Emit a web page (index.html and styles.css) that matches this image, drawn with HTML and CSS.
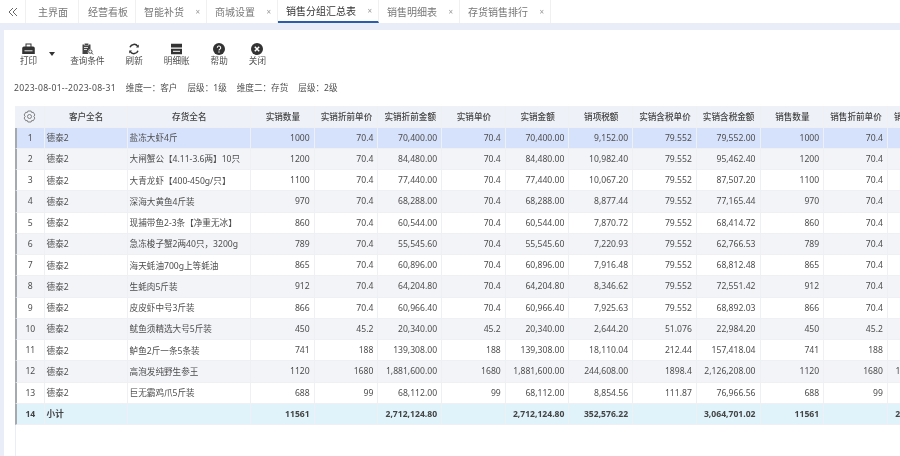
FILE: index.html
```html
<!DOCTYPE html>
<html lang="zh-CN">
<head>
    <meta charset="UTF-8">
    <title>销售分组汇总表</title>
    <link rel="stylesheet" href="styles.css">
</head>
<body>
    <div class="tabs">
        <div class="tab-toggle">
            <svg width="10" height="10" viewBox="0 0 10 10"><path d="M5 1 1 5l4 4M9 1 5 5l4 4" fill="none" stroke="#666" stroke-width="1"/></svg>
        </div>
        <div class="tab tab-home">主界面</div>
        <div class="tab tab-board">经营看板</div>
        <div class="tab tab-refill">智能补货<span class="tab-close">×</span></div>
        <div class="tab tab-mall">商城设置<span class="tab-close">×</span></div>
        <div class="tab tab-group active">销售分组汇总表<span class="tab-close">×</span></div>
        <div class="tab tab-detail">销售明细表<span class="tab-close">×</span></div>
        <div class="tab tab-rank">存货销售排行<span class="tab-close">×</span></div>
    </div>

    <div class="panel">
        <div class="toolbar">
            <div class="tool">
                <svg width="13" height="12" viewBox="0 0 13 12"><path d="M3.500.5h6v3.500h-6z" fill="#333"/><path d="M2 3.500h9a1.800 1.800 0 0 1 1.800 1.800V11H.2V5.300A1.800 1.800 0 0 1 2 3.500z" fill="#333"/><path d="M2.500 7.800h8" stroke="#fff" stroke-width=".9"/><path d="M4.500 1.500h4v2h-4z" fill="#fff"/></svg>
                <span>打印</span>
            </div>
            <div class="tool-arrow"></div>
            <div class="tool">
                <svg width="13" height="12" viewBox="0 0 13 12"><path d="M1.500 1.500h8v4.500a3 3 0 0 0-2 5h-6z" fill="#444"/><path d="M3.500.3h4v2h-4z" fill="#333" stroke="#fff" stroke-width=".5"/><path d="M3 4.500h4M3 6.500h3" stroke="#fff" stroke-width=".8"/><circle cx="9.300" cy="8.600" r="1.700" fill="none" stroke="#444" stroke-width=".9"/><path d="m10.500 9.900 1.500 1.500" stroke="#444"/></svg>
                <span>查询条件</span>
            </div>
            <div class="tool">
                <svg width="12" height="12" viewBox="0 0 12 12"><path d="M2 4.200A4.300 4.300 0 0 1 9.700 3.400M10 7.800A4.300 4.300 0 0 1 2.300 8.600" fill="none" stroke="#333" stroke-width="1.500"/><path d="M10.800 1.500v3H8zM1.200 10.500v-3H4z" fill="#333"/></svg>
                <span>刷新</span>
            </div>
            <div class="tool">
                <svg width="13" height="12" viewBox="0 0 13 12"><path d="M1 .8h11v3.700H1zM1 5.800h11v5.400H1z" fill="#333"/><path d="M3 8.300h7" stroke="#fff" stroke-width="1"/></svg>
                <span>明细账</span>
            </div>
            <div class="tool">
                <svg width="12" height="12" viewBox="0 0 12 12"><circle cx="6" cy="6" r="6" fill="#333"/><path d="M4.300 4.700a1.700 1.700 0 1 1 2.500 1.500c-.6.300-.8.600-.8 1.200" fill="none" stroke="#fff" stroke-width="1.100"/><circle cx="6" cy="9" r=".7" fill="#fff"/></svg>
                <span>帮助</span>
            </div>
            <div class="tool">
                <svg width="12" height="12" viewBox="0 0 12 12"><circle cx="6" cy="6" r="6" fill="#333"/><path d="m3.800 3.800 4.400 4.400m0-4.400L3.800 8.200" stroke="#fff" stroke-width="1.500"/></svg>
                <span>关闭</span>
            </div>
        </div>

        <div class="filters">
            <span class="date-range">2023-08-01--2023-08-31</span>
            <span>维度一：客户</span>
            <span>层级：1级</span>
            <span>维度二：存货</span>
            <span>层级：2级</span>
        </div>

        <div class="grid-wrap">
            <table class="grid">
                <colgroup>
                    <col class="col-idx"><col class="col-customer"><col class="col-stock">
                    <col class="col-num"><col class="col-num"><col class="col-num"><col class="col-num"><col class="col-num">
                    <col class="col-num"><col class="col-num"><col class="col-num"><col class="col-num"><col class="col-num"><col class="col-num">
                </colgroup>
                <thead>
                    <tr>
                        <th>
                            <svg width="13" height="13" viewBox="0 0 13 13"><path d="M4.900 1h3.200l.6 1.500 1.600-.2 1.600 2.700-1 1.300.0.400 1 1.300-1.600 2.700-1.600-.2L8.100 12H4.900l-.6-1.500-1.600.2L1.100 8l1-1.300v-.4L1.100 5l1.600-2.700 1.600.2z" fill="none" stroke="#666" stroke-width=".8" stroke-linejoin="round"/><circle cx="6.500" cy="6.500" r="2" fill="none" stroke="#666" stroke-width=".8"/></svg>
                        </th>
                        <th>客户全名</th><th>存货全名</th><th>实销数量</th><th>实销折前单价</th><th>实销折前金额</th><th>实销单价</th><th>实销金额</th><th>销项税额</th><th>实销含税单价</th><th>实销含税金额</th><th>销售数量</th><th>销售折前单价</th><th>销售折前金额</th>
                    </tr>
                </thead>
                <tbody>
                    <tr class="selected"><td class="idx">1</td><td>德泰2</td><td>盐冻大虾4斤</td><td class="num">1000</td><td class="num">70.4</td><td class="num">70,400.00</td><td class="num">70.4</td><td class="num">70,400.00</td><td class="num">9,152.00</td><td class="num">79.552</td><td class="num">79,552.00</td><td class="num">1000</td><td class="num">70.4</td><td class="num">70,400.00</td></tr>
                    <tr><td class="idx">2</td><td>德泰2</td><td>大闸蟹公【4.11-3.6两】10只</td><td class="num">1200</td><td class="num">70.4</td><td class="num">84,480.00</td><td class="num">70.4</td><td class="num">84,480.00</td><td class="num">10,982.40</td><td class="num">79.552</td><td class="num">95,462.40</td><td class="num">1200</td><td class="num">70.4</td><td class="num">84,480.00</td></tr>
                    <tr><td class="idx">3</td><td>德泰2</td><td>大青龙虾【400-450g/只】</td><td class="num">1100</td><td class="num">70.4</td><td class="num">77,440.00</td><td class="num">70.4</td><td class="num">77,440.00</td><td class="num">10,067.20</td><td class="num">79.552</td><td class="num">87,507.20</td><td class="num">1100</td><td class="num">70.4</td><td class="num">77,440.00</td></tr>
                    <tr><td class="idx">4</td><td>德泰2</td><td>深海大黄鱼4斤装</td><td class="num">970</td><td class="num">70.4</td><td class="num">68,288.00</td><td class="num">70.4</td><td class="num">68,288.00</td><td class="num">8,877.44</td><td class="num">79.552</td><td class="num">77,165.44</td><td class="num">970</td><td class="num">70.4</td><td class="num">68,288.00</td></tr>
                    <tr><td class="idx">5</td><td>德泰2</td><td>现捕带鱼2-3条【净重无冰】</td><td class="num">860</td><td class="num">70.4</td><td class="num">60,544.00</td><td class="num">70.4</td><td class="num">60,544.00</td><td class="num">7,870.72</td><td class="num">79.552</td><td class="num">68,414.72</td><td class="num">860</td><td class="num">70.4</td><td class="num">60,544.00</td></tr>
                    <tr><td class="idx">6</td><td>德泰2</td><td>急冻梭子蟹2两40只，3200g</td><td class="num">789</td><td class="num">70.4</td><td class="num">55,545.60</td><td class="num">70.4</td><td class="num">55,545.60</td><td class="num">7,220.93</td><td class="num">79.552</td><td class="num">62,766.53</td><td class="num">789</td><td class="num">70.4</td><td class="num">55,545.60</td></tr>
                    <tr><td class="idx">7</td><td>德泰2</td><td>海天蚝油700g上等蚝油</td><td class="num">865</td><td class="num">70.4</td><td class="num">60,896.00</td><td class="num">70.4</td><td class="num">60,896.00</td><td class="num">7,916.48</td><td class="num">79.552</td><td class="num">68,812.48</td><td class="num">865</td><td class="num">70.4</td><td class="num">60,896.00</td></tr>
                    <tr><td class="idx">8</td><td>德泰2</td><td>生蚝肉5斤装</td><td class="num">912</td><td class="num">70.4</td><td class="num">64,204.80</td><td class="num">70.4</td><td class="num">64,204.80</td><td class="num">8,346.62</td><td class="num">79.552</td><td class="num">72,551.42</td><td class="num">912</td><td class="num">70.4</td><td class="num">64,204.80</td></tr>
                    <tr><td class="idx">9</td><td>德泰2</td><td>皮皮虾中号3斤装</td><td class="num">866</td><td class="num">70.4</td><td class="num">60,966.40</td><td class="num">70.4</td><td class="num">60,966.40</td><td class="num">7,925.63</td><td class="num">79.552</td><td class="num">68,892.03</td><td class="num">866</td><td class="num">70.4</td><td class="num">60,966.40</td></tr>
                    <tr><td class="idx">10</td><td>德泰2</td><td>鱿鱼须精选大号5斤装</td><td class="num">450</td><td class="num">45.2</td><td class="num">20,340.00</td><td class="num">45.2</td><td class="num">20,340.00</td><td class="num">2,644.20</td><td class="num">51.076</td><td class="num">22,984.20</td><td class="num">450</td><td class="num">45.2</td><td class="num">20,340.00</td></tr>
                    <tr><td class="idx">11</td><td>德泰2</td><td>鲈鱼2斤一条5条装</td><td class="num">741</td><td class="num">188</td><td class="num">139,308.00</td><td class="num">188</td><td class="num">139,308.00</td><td class="num">18,110.04</td><td class="num">212.44</td><td class="num">157,418.04</td><td class="num">741</td><td class="num">188</td><td class="num">139,308.00</td></tr>
                    <tr><td class="idx">12</td><td>德泰2</td><td>高泡发纯野生参王</td><td class="num">1120</td><td class="num">1680</td><td class="num">1,881,600.00</td><td class="num">1680</td><td class="num">1,881,600.00</td><td class="num">244,608.00</td><td class="num">1898.4</td><td class="num">2,126,208.00</td><td class="num">1120</td><td class="num">1680</td><td class="num">1,881,600.00</td></tr>
                    <tr><td class="idx">13</td><td>德泰2</td><td>巨无霸鸡爪5斤装</td><td class="num">688</td><td class="num">99</td><td class="num">68,112.00</td><td class="num">99</td><td class="num">68,112.00</td><td class="num">8,854.56</td><td class="num">111.87</td><td class="num">76,966.56</td><td class="num">688</td><td class="num">99</td><td class="num">68,112.00</td></tr>
                    <tr class="total"><td class="idx">14</td><td>小计</td><td></td><td class="num">11561</td><td></td><td class="num">2,712,124.80</td><td></td><td class="num">2,712,124.80</td><td class="num">352,576.22</td><td></td><td class="num">3,064,701.02</td><td class="num">11561</td><td></td><td class="num">2,712,124.80</td></tr>
                </tbody>
            </table>
        </div>
    </div>
</body>
</html>
```

FILE: styles.css
```css
html, body {
    height: 100%;
}
body {
    margin: 0;
    overflow: hidden;
    display: flex;
    flex-direction: column;
    font-family: "Noto Sans", "Noto Sans CJK SC", sans-serif;
    font-size: 8.6px;
    color: #4d4d4d;
    background: #e9edf7;
    filter: blur(0.3px);
}

/* top tabs */
.tabs {
    display: flex;
    height: 23px;
    flex: none;
    background: #fff;
}
.tab-toggle {
    width: 26px;
    flex: none;
    display: flex;
    align-items: center;
    justify-content: center;
    border-right: 1px solid #f0f0f0;
    box-sizing: border-box;
}
.tab {
    box-sizing: border-box;
    display: flex;
    align-items: center;
    padding-left: 8px;
    font-size: 10px;
    color: #777;
    border-right: 1px solid #f0f0f0;
    white-space: nowrap;
}
.tab-home { width: 53px; padding-left: 12px; }
.tab-board { width: 57px; padding-left: 9px; }
.tab-refill, .tab-mall { width: 71px; }
.tab-group { width: 101px; }
.tab-detail { width: 81px; }
.tab-rank { width: 91px; }
.tab.active {
    color: #333;
    border-bottom: 2px solid #2b5ea7;
}
.tab-close {
    margin-left: auto;
    margin-right: 6px;
    font-size: 8px;
    color: #999;
}

/* main panel */
.panel {
    flex: 1;
    margin: 7px 0 0 4px;
    background: #fff;
    min-height: 0;
    display: flex;
    flex-direction: column;
}
.toolbar {
    display: flex;
    gap: 21px;
    padding: 13px 0 0 16px;
}
.tool {
    display: flex;
    flex-direction: column;
    align-items: center;
}
.tool span {
    line-height: 12px;
}
.tool-arrow {
    width: 0;
    height: 0;
    margin: 9px -6px 0 -9px;
    border-left: 3px solid transparent;
    border-right: 3px solid transparent;
    border-top: 4px solid #333;
}
.filters {
    display: flex;
    gap: 10px;
    padding: 15px 0 0 10px;
    line-height: 12px;
}
.date-range {
    letter-spacing: 0.3px;
}

/* data grid */
.grid-wrap {
    flex: 1;
    margin: 12px 0 0 11px;
    box-shadow: inset 1px 0 #e9edf7;
    overflow: hidden;
}
.grid {
    border-collapse: separate;
    border-spacing: 0;
    table-layout: fixed;
    width: 936.7px;
}
.col-idx { width: 29.6px; }
.col-customer { width: 83px; }
.col-stock { width: 123.4px; }
.col-num { width: 63.7px; }
.grid th, .grid td {
    height: 21.25px;
    padding: 0 6px;
    box-sizing: border-box;
    border-right: 1px solid #eef0f4;
    border-bottom: 1px solid #eef0f4;
    white-space: nowrap;
    overflow: hidden;
}
.grid th {
    height: 21.5px;
    padding: 0 0 0 1px;
    background: #eef1f7;
    color: #444;
    font-weight: 500;
    text-align: center;
}
.grid th svg {
    display: block;
    margin: auto;
}
.grid td {
    text-align: left;
    padding-left: 2px;
}
.grid td.idx {
    padding: 0;
    text-align: center;
    border-left: 2px solid #a5a9b0;
}
.grid td.num {
    text-align: right;
    padding: 0 4px 0 0;
    overflow: visible;
}
.grid tbody tr:nth-child(even) td {
    background: #f3f4f8;
}
.grid tbody tr.selected td {
    background: #d6e2fb;
}
.grid tbody tr.total td {
    background: #e0f3fb;
    font-weight: 700;
    color: #444;
}
```
